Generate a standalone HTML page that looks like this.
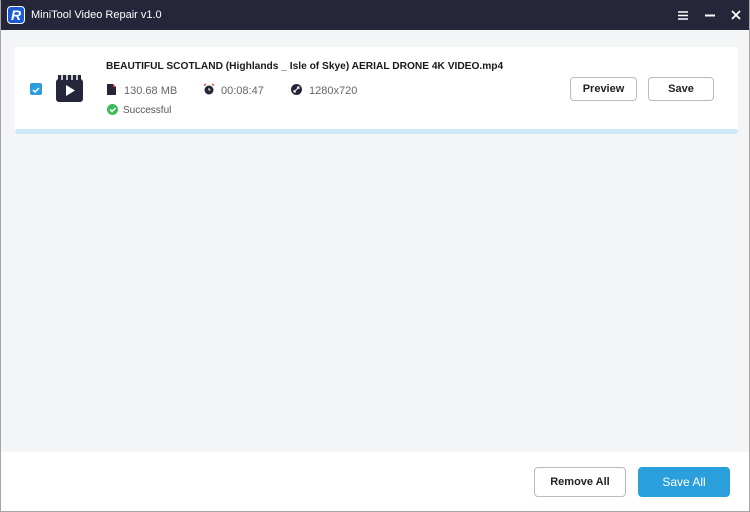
<!DOCTYPE html>
<html><head><meta charset="utf-8"><style>
*{margin:0;padding:0;box-sizing:border-box}
body{width:750px;height:512px;overflow:hidden;background:#f4f5f7;font-family:"Liberation Sans",Arial,sans-serif;position:relative}
.frame{position:absolute;inset:0;border:1px solid #a9a4a6;border-top:none;pointer-events:none}
.title{position:absolute;left:0;top:0;width:750px;height:30px;background:#25263a;color:#fff;font-size:11px}
.title .t{position:absolute;left:31px;top:9px}
.logo{position:absolute;left:7px;top:6px;width:18px;height:18px;border-radius:4px;background:#1c5bd6;border:1px solid #fff;color:#fff;font:italic bold 14px "Liberation Sans";text-align:center;line-height:16px}
.card{position:absolute;left:15px;top:47px;width:723px;height:87px;background:#fff}
.bar{position:absolute;left:15px;top:129px;width:723px;height:5px;background:#cfe8f7;border-radius:3px}
.cb{position:absolute;left:30px;top:83px;width:12px;height:12px;background:#2c9ee0;border-radius:2px}
.name{position:absolute;left:106px;top:61px;font-size:10.2px;font-weight:bold;color:#1a1a1a}
.meta{position:absolute;top:85px;font-size:11px;color:#666}
.ok{position:absolute;left:123px;top:105px;font-size:10px;color:#555}
.btn{position:absolute;border:1px solid #bbb;border-radius:4px;background:#fff;font-size:11px;font-weight:bold;text-align:center;color:#222}
.bottom{position:absolute;left:0;top:452px;width:750px;height:60px;background:#fff}
</style></head><body>
<div class="title"><div class="logo">R</div><span class="t">MiniTool Video Repair v1.0</span>
<svg style="position:absolute;left:678px;top:11px" width="10" height="9"><path d="M0 1h10M0 4.5h10M0 8h10" stroke="#fff" stroke-width="1.6"/></svg>
<svg style="position:absolute;left:705px;top:14px" width="10" height="3"><path d="M0 1.5h10" stroke="#fff" stroke-width="2"/></svg>
<svg style="position:absolute;left:731px;top:10px" width="10" height="10"><path d="M1 1l8 8M9 1l-8 8" stroke="#fff" stroke-width="1.8"/></svg>
</div>
<div class="card"></div><div class="bar"></div>
<div class="cb"><svg width="12" height="12"><path d="M3 6l2 2 4-4" stroke="#fff" stroke-width="1.5" fill="none"/></svg></div>
<svg style="position:absolute;left:56px;top:74px" width="27" height="28"><rect x="0" y="5" width="27" height="23" rx="3" fill="#25263a"/><path d="M2 1h23v6H2z" fill="#25263a"/><path d="M6 1v5M11 1v5M16 1v5M21 1v5" stroke="#fff" stroke-width="1.5"/><path d="M10 11l9 5.5-9 5.5z" fill="#fff"/></svg>
<div class="name">BEAUTIFUL SCOTLAND (Highlands _ Isle of Skye) AERIAL DRONE 4K VIDEO.mp4</div>
<svg style="position:absolute;left:107px;top:84px" width="9" height="11"><path d="M0 0h6l3 3v8H0z" fill="#25263a"/><path d="M6 0l3 3H6z" fill="#e33"/></svg>
<div class="meta" style="left:124px">130.68 MB</div>
<svg style="position:absolute;left:203px;top:83px" width="12" height="12"><circle cx="6" cy="7" r="4.5" fill="#25263a"/><path d="M1 2.5l2-1.5M11 2.5l-2-1.5" stroke="#e33" stroke-width="1.3"/><path d="M6 5v2h1.5" stroke="#fff" stroke-width="1"/></svg>
<div class="meta" style="left:221px">00:08:47</div>
<svg style="position:absolute;left:291px;top:84px" width="11" height="11"><circle cx="5.5" cy="5.5" r="5.5" fill="#25263a"/><path d="M3 8l5-5M6 3h2v2M5 8H3V6" stroke="#fff" stroke-width="1" fill="none"/></svg>
<div class="meta" style="left:309px">1280x720</div>
<svg style="position:absolute;left:107px;top:104px" width="11" height="11"><circle cx="5.5" cy="5.5" r="5.5" fill="#3cbb5a"/><path d="M3 5.5l2 2 3.5-3.5" stroke="#fff" stroke-width="1.4" fill="none"/></svg>
<div class="ok">Successful</div>
<div class="btn" style="left:570px;top:77px;width:67px;height:24px;line-height:22px">Preview</div>
<div class="btn" style="left:648px;top:77px;width:66px;height:24px;line-height:22px">Save</div>
<div class="bottom"></div>
<div class="btn" style="left:534px;top:467px;width:92px;height:30px;line-height:28px">Remove All</div>
<div class="btn" style="left:638px;top:467px;width:92px;height:30px;line-height:28px;background:#2a9fdb;border-color:#2a9fdb;color:#fff;font-weight:normal;font-size:12px">Save All</div>
<div class="frame"></div>
</body></html>
